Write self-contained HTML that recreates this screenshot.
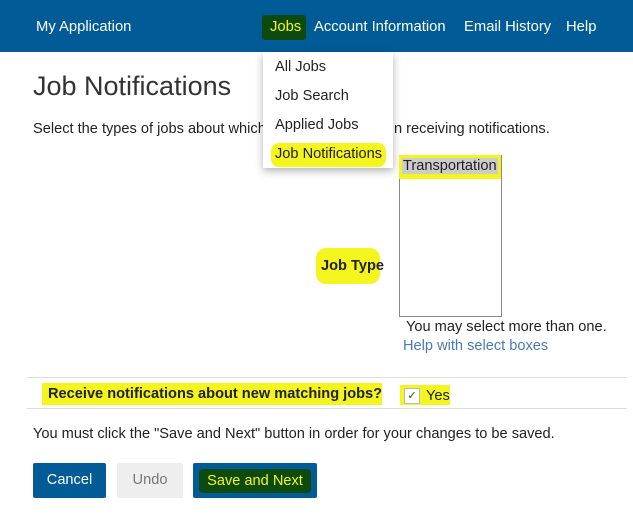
<!DOCTYPE html>
<html><head><style>
body{margin:0;width:633px;height:529px;background:#fff;font-family:"Liberation Sans",sans-serif;color:#222;position:relative;overflow:hidden;font-size:14.6px}
.a{position:absolute;white-space:nowrap}
.nav{position:absolute;left:0;top:0;width:633px;height:52px;background:#005b96}
.nav .a{color:#fff;font-size:14.8px;top:19px}
.hl{background:#f4f41e}
</style></head><body>
<div class="nav">
<div class="a" style="left:36px">My Application</div>
<div class="a" style="left:262px;top:15px;width:44px;height:25px;background:#0d4a0d;border-radius:3px"></div>
<div class="a" style="left:270px;color:#f4f41e">Jobs</div>
<div class="a" style="left:314px">Account Information</div>
<div class="a" style="left:464px">Email History</div>
<div class="a" style="left:566px">Help</div>
</div>
<div class="a" style="left:33px;top:71px;font-size:27px;font-weight:300;color:#333">Job Notifications</div>
<div class="a" style="left:33px;top:121px">Select the types of jobs about which you are interested in receiving notifications.</div>
<div class="a" style="left:263px;top:52px;width:130px;height:116px;background:#fff;box-shadow:0 3px 8px rgba(0,0,0,.3)"></div>
<div class="a" style="left:275px;top:59px">All Jobs</div>
<div class="a" style="left:275px;top:88px">Job Search</div>
<div class="a" style="left:275px;top:117px">Applied Jobs</div>
<div class="a hl" style="left:271px;top:143px;width:115px;height:24px;border-radius:8px"></div>
<div class="a" style="left:275px;top:146px">Job Notifications</div>
<div class="a" style="left:399px;top:155px;width:101px;height:160px;border:1px solid #888"></div>
<div class="a hl" style="left:399px;top:155px;width:102px;height:24px"></div>
<div class="a" style="left:402px;top:158px;background:#ccc;padding:0 1px">Transportation</div>
<div class="a hl" style="left:316px;top:248px;width:64px;height:36px;border-radius:10px"></div>
<div class="a" style="left:321px;top:258px;font-weight:bold">Job Type</div>
<div class="a" style="left:406px;top:319px">You may select more than one.</div>
<div class="a" style="left:403px;top:338px;color:#4a7ab5">Help with select boxes</div>
<div class="a" style="left:27px;top:377px;width:600px;border-top:1px solid #ddd"></div>
<div class="a" style="left:27px;top:408px;width:600px;border-top:1px solid #ddd"></div>
<div class="a hl" style="left:42px;top:383px;width:340px;height:22px"></div>
<div class="a" style="left:48px;top:386px;font-weight:bold">Receive notifications about new matching jobs?</div>
<div class="a hl" style="left:400px;top:385px;width:50px;height:20px"></div>
<div class="a" style="left:404px;top:388px;width:14px;height:14px;border:1px solid #bbb;background:#fff;font-size:11px;text-align:center;line-height:14px;color:#060">✓</div>
<div class="a" style="left:426px;top:388px">Yes</div>
<div class="a" style="left:33px;top:426px">You must click the "Save and Next" button in order for your changes to be saved.</div>
<div class="a" style="left:33px;top:463px;width:73px;height:35px;background:#005b96;border-radius:2px;color:#fff;text-align:center;line-height:35px">Cancel</div>
<div class="a" style="left:117px;top:463px;width:66px;height:35px;background:#eee;border-radius:2px;color:#777;text-align:center;line-height:35px">Undo</div>
<div class="a" style="left:193px;top:463px;width:124px;height:35px;background:#005b96;border-radius:2px"></div>
<div class="a" style="left:199px;top:469px;width:112px;height:24px;background:#0d4a0d;border-radius:4px;color:#f4f41e;text-align:center;line-height:24px">Save and Next</div>
</body></html>
